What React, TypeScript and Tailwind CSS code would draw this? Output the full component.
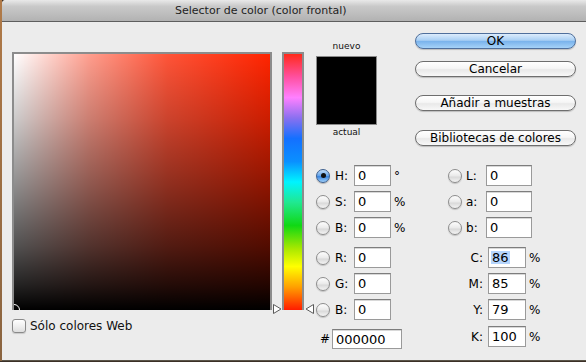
import React from "react";

const font = { fontFamily: '"DejaVu Sans", "Noto Sans", sans-serif' };

function Radio({ checked = false }: { checked?: boolean }) {
  return checked ? (
    <div className="w-[14px] h-[14px] rounded-full border border-[#3d5f8e] bg-[linear-gradient(to_bottom,#c4def8_0%,#6aa8ec_45%,#3b86e0_55%,#9fd0fa_100%)] flex items-center justify-center shrink-0 shadow-[0_1px_1px_rgba(0,0,0,0.25)]">
      <div className="w-[5px] h-[5px] rounded-full bg-[#111]" />
    </div>
  ) : (
    <div className="w-[14px] h-[14px] rounded-full border border-[#8d8d8d] bg-[linear-gradient(to_bottom,#fdfdfd_0%,#ececec_45%,#dadada_60%,#f4f4f4_100%)] shrink-0 shadow-[0_1px_1px_rgba(0,0,0,0.18)]" />
  );
}

function Field({ value, w, selected = false }: { value: string; w: string; selected?: boolean }) {
  return (
    <div
      className={`${w} h-[21px] bg-white border border-[#9a9a9a] border-t-[#7d7d7d] shadow-[inset_0_1px_0_#d8d8d8] flex items-center pl-[2px] text-[13px] text-black leading-none shrink-0`}
    >
      {selected ? <span className="bg-[#b5d5fd] px-[1px]">{value}</span> : <span className="pl-[1px]">{value}</span>}
    </div>
  );
}

function Button({ label, primary = false }: { label: string; primary?: boolean }) {
  return (
    <div
      className={
        primary
          ? "w-[161px] h-[16px] rounded-full border border-[#4f6f9c] bg-[linear-gradient(to_bottom,#dcecfc_0%,#a9cff4_45%,#7ab3ec_52%,#a5d2f8_100%)] flex items-center justify-center text-[12px] text-black leading-none shadow-[0_1px_1px_rgba(0,0,0,0.2)]"
          : "w-[161px] h-[16px] rounded-full border border-[#6e6e6e] bg-[linear-gradient(to_bottom,#ffffff_0%,#f6f6f6_45%,#e9e9e9_55%,#f8f8f8_100%)] flex items-center justify-center text-[12px] text-black leading-none shadow-[0_1px_1px_rgba(0,0,0,0.2)]"
      }
    >
      {label}
    </div>
  );
}

function LeftRow({ letter, value, unit, checked = false }: { letter: string; value: string; unit?: string; checked?: boolean }) {
  return (
    <div className="flex items-center h-[21px]">
      <Radio checked={checked} />
      <span className="ml-[5px] w-[19px] text-[12px] leading-none">{letter}:</span>
      <Field value={value} w="w-[37px]" />
      {unit && <span className="ml-[3px] text-[12px] leading-none">{unit}</span>}
    </div>
  );
}

function LabRow({ letter, value }: { letter: string; value: string }) {
  return (
    <div className="flex items-center h-[21px]">
      <Radio />
      <span className="ml-[4px] w-[20px] text-[12px] leading-none">{letter}:</span>
      <Field value={value} w="w-[46px]" />
    </div>
  );
}

function CmykRow({ letter, value, selected = false }: { letter: string; value: string; selected?: boolean }) {
  return (
    <div className="flex items-center h-[21px]">
      <span className="w-[35px] text-right text-[12px] leading-none">{letter}:</span>
      <div className="ml-[5px]">
        <Field value={value} w="w-[38px]" selected={selected} />
      </div>
      <span className="ml-[3px] text-[12px] leading-none">%</span>
    </div>
  );
}

export default function App() {
  return (
    <div className="w-[586px] h-[362px] bg-[#3b3026] overflow-hidden" style={font}>
      <div className="flex h-[361px]">
        <div className="w-[2px] h-full bg-[linear-gradient(to_bottom,#b07a48,#8a6440)]" />
        <div className="w-[584px] h-full bg-[#ececec] border-b border-[#5a5448] rounded-tl-[4px] flex flex-col overflow-hidden">
          {/* title bar */}
          <div className="h-[22px] shrink-0 bg-[linear-gradient(to_bottom,#e9e9e9_0%,#c9c9c9_30%,#b2b2b2_100%)] border-b border-[#5e5e5e] flex items-center pl-[173px] text-[11px] text-[#1e1e1e] leading-none">
            Selector de color (color frontal)
          </div>

          <div className="flex flex-1">
            {/* color field */}
            <div className="ml-[10px] mt-[30px] flex flex-col">
              <div className="relative w-[260px] h-[258px] border-2 border-b-0 border-[#8c8c8c] overflow-hidden">
                <div className="absolute inset-0 bg-[#ff2400]" />
                <div className="absolute inset-0 bg-[linear-gradient(to_right,#ffffff_0%,rgba(255,255,255,0.55)_30%,rgba(255,255,255,0.22)_60%,rgba(255,255,255,0)_100%)]" />
                <div className="absolute inset-0 bg-[linear-gradient(to_bottom,rgba(0,0,0,0)_0%,rgba(0,0,0,0.2)_25%,rgba(0,0,0,0.43)_50%,rgba(0,0,0,0.68)_75%,rgba(0,0,0,0.86)_90%,#000000_100%)]" />
                <div className="absolute left-[-6px] bottom-[-6px] w-[12px] h-[12px] rounded-full border-[1.5px] border-white" />
              </div>
              <div className="mt-[9px] flex items-center">
                <div className="w-[14px] h-[14px] rounded-[3px] border border-[#8a8a8a] bg-[linear-gradient(to_bottom,#ffffff_0%,#f0f0f0_50%,#dedede_100%)] shadow-[0_1px_1px_rgba(0,0,0,0.15)]" />
                <span className="ml-[4px] text-[12px] leading-none text-[#111]">Sólo colores Web</span>
              </div>
            </div>

            {/* hue slider */}
            <div className="ml-[10px] mt-[30px] relative w-[22px] h-[258px]">
              <div className="w-full h-full border-2 border-b-0 border-[#8c8c8c] bg-[linear-gradient(to_bottom,#ff2a1a_0%,#ff50a0_9%,#ff80ff_17%,#8a70f0_25%,#1470ff_33%,#0a90ff_42%,#00f4ff_50%,#20e890_58%,#10d814_67%,#a8e800_76%,#ffff00_83%,#ffa000_91%,#ff1c00_100%)]" />
              <svg className="absolute left-[-9px] top-[252px]" width="9" height="10" viewBox="0 0 9 10">
                <polygon points="0.5,0.5 8,5 0.5,9.5" fill="#ffffff" stroke="#5a5a5a" strokeWidth="1" />
              </svg>
              <svg className="absolute left-[23px] top-[252px]" width="9" height="10" viewBox="0 0 9 10">
                <polygon points="8.5,0.5 1,5 8.5,9.5" fill="#ffffff" stroke="#5a5a5a" strokeWidth="1" />
              </svg>
            </div>

            {/* right area */}
            <div className="ml-[12px] flex flex-col">
              <div className="flex h-[143px]">
                <div className="w-[61px] flex flex-col items-center pt-[18px]">
                  <div className="h-[12px] text-[9px] leading-[12px] text-[#111]">nuevo</div>
                  <div className="mt-[4px] w-[61px] h-[69px] bg-black border border-[#8a8a8a]" />
                  <div className="mt-[1px] h-[12px] text-[9px] leading-[12px] text-[#111]">actual</div>
                </div>
                <div className="ml-[38px] pt-[11px] flex flex-col">
                  <Button label="OK" primary />
                  <div className="mt-[12px]">
                    <Button label="Cancelar" />
                  </div>
                  <div className="mt-[18px]">
                    <Button label="Añadir a muestras" />
                  </div>
                  <div className="mt-[19px]">
                    <Button label="Bibliotecas de colores" />
                  </div>
                </div>
              </div>

              <div className="flex">
                <div className="w-[132px] flex flex-col">
                  <div className="flex flex-col gap-[5px]">
                    <LeftRow letter="H" value="0" unit="°" checked />
                    <LeftRow letter="S" value="0" unit="%" />
                    <LeftRow letter="B" value="0" unit="%" />
                  </div>
                  <div className="mt-[9px] flex flex-col gap-[5px]">
                    <LeftRow letter="R" value="0" />
                    <LeftRow letter="G" value="0" />
                    <LeftRow letter="B" value="0" />
                  </div>
                  <div className="mt-[9px] flex items-center h-[20px] pl-[4px]">
                    <span className="w-[12px] text-[12px] leading-none">#</span>
                    <div className="w-[70px] h-[20px] bg-white border border-[#9a9a9a] border-t-[#7d7d7d] shadow-[inset_0_1px_0_#d8d8d8] flex items-center pl-[3px] text-[13px] leading-none">
                      000000
                    </div>
                  </div>
                </div>
                <div className="flex flex-col">
                  <div className="flex flex-col gap-[5px]">
                    <LabRow letter="L" value="0" />
                    <LabRow letter="a" value="0" />
                    <LabRow letter="b" value="0" />
                  </div>
                  <div className="mt-[9px] flex flex-col gap-[5px]">
                    <CmykRow letter="C" value="86" selected />
                    <CmykRow letter="M" value="85" />
                    <CmykRow letter="Y" value="79" />
                  </div>
                  <div className="mt-[6px]">
                    <CmykRow letter="K" value="100" />
                  </div>
                </div>
              </div>
            </div>
          </div>
        </div>
      </div>
    </div>
  );
}
